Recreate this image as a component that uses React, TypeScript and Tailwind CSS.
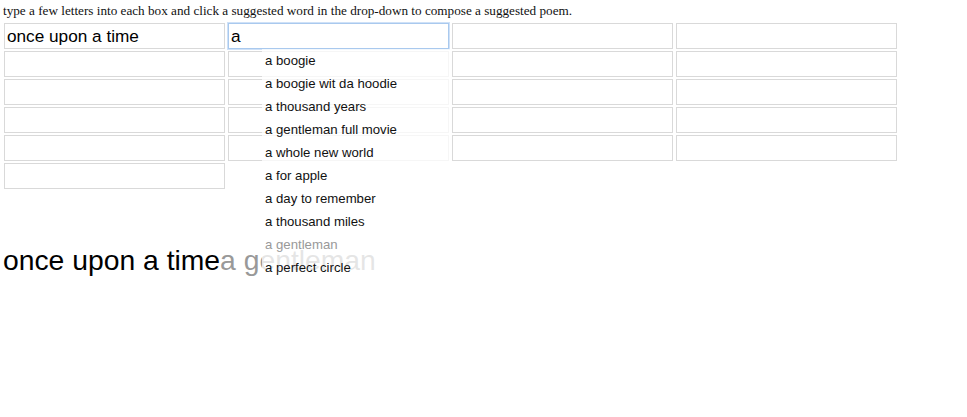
import React from "react";

const suggestions = [
  "a boogie",
  "a boogie wit da hoodie",
  "a thousand years",
  "a gentleman full movie",
  "a whole new world",
  "a for apple",
  "a day to remember",
  "a thousand miles",
  "a gentleman",
  "a perfect circle",
];

const columns: string[][] = [
  ["once upon a time", "", "", "", "", ""],
  ["a", "", "", "", ""],
  ["", "", "", "", ""],
  ["", "", "", "", ""],
];

const sans = { fontFamily: '"Liberation Sans", Arial, sans-serif' };

const App = () => {
  return (
    <div className="relative min-h-[417px] bg-white text-black">
      <p
        className="pl-[3px] pt-[3px] text-[13.2px] leading-[16px] text-[#111]"
        style={{ fontFamily: '"Liberation Serif", "Times New Roman", serif' }}
      >
        type a few letters into each box and click a suggested word in the drop-down to compose a suggested poem.
      </p>

      <div className="mt-[4px] flex items-start gap-[3px] pl-[4px]" style={sans}>
        {columns.map((col, ci) => (
          <div key={ci} className="flex w-[221px] flex-col gap-[2px]">
            {col.map((val, ri) => {
              const focused = ci === 1 && ri === 0;
              return (
                <input
                  key={ri}
                  readOnly
                  value={val}
                  className={
                    focused
                      ? "h-[26px] w-[221px] border border-[#a9c9ee] px-[2px] text-[17.2px] text-black shadow-[0_0_0_1px_#cfe1f7] outline-none"
                      : "h-[26px] w-[221px] border border-[#d9d9d9] px-[2px] text-[17.2px] text-black outline-none"
                  }
                  style={sans}
                />
              );
            })}
          </div>
        ))}
      </div>

      <div className="mt-[55px] pl-[3px] text-[28.3px] leading-[32px] whitespace-nowrap" style={sans}>
        <span className="text-black">once upon a time</span>
        <span className="text-[#999]">a gentleman</span>
      </div>

      <ul className="absolute left-[262px] top-[49px] w-[188px] bg-white/75" style={sans}>
        {suggestions.map((s, i) => (
          <li
            key={s}
            className={
              i === 8
                ? "h-[23px] pl-[3px] text-[13.2px] leading-[23px] text-[#999]"
                : "h-[23px] pl-[3px] text-[13.2px] leading-[23px] text-[#111]"
            }
          >
            {s}
          </li>
        ))}
      </ul>
    </div>
  );
};

export default App;
